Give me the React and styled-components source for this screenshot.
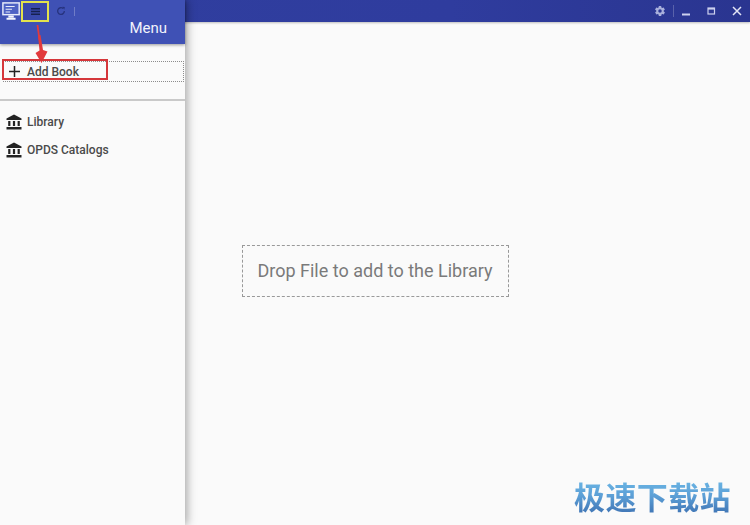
import styled, { createGlobalStyle } from 'styled-components';

const GlobalStyle = createGlobalStyle`
    html, body {
        margin: 0;
        padding: 0;
        background: #fafafa;
    }
    body {
        font-family: Roboto, "Liberation Sans", sans-serif;
    }
`;

const Page = styled.div`
    position: relative;
    display: flex;
    width: 750px;
    height: 525px;
    overflow: hidden;
    background: #fafafa;
`;

const Drawer = styled.aside`
    position: absolute;
    z-index: 2;
    top: 0;
    bottom: 0;
    left: 0;
    width: 185px;
    display: flex;
    flex-direction: column;
    background: #fafafa;
    box-shadow: 2px 0 9px rgba(0, 0, 0, 0.35);
`;

const DrawerHeader = styled.header`
    height: 44px;
    box-sizing: border-box;
    display: flex;
    align-items: flex-end;
    justify-content: flex-end;
    padding: 0 18px 7px 0;
    background: #3f51b5;
    box-shadow: 0 1px 3px rgba(0, 0, 0, 0.4);
    color: #f2f3fb;
    font-size: 15px;
`;

const AddBookRow = styled.div`
    height: 21px;
    margin: 17px 1px 0 3px;
    box-sizing: border-box;
    display: flex;
    align-items: center;
    gap: 7px;
    padding-left: 5px;
    border: 1px dotted #8c8c8c;
    font-size: 12px;
    font-weight: 500;
    color: #4a4a4a;
`;

const Divider = styled.hr`
    width: 100%;
    height: 2px;
    margin: 17px 0 0;
    border: 0;
    background: #c9c9c9;
`;

const NavList = styled.nav`
    display: flex;
    flex-direction: column;
    padding: 11px 0 0 6px;
    gap: 8px;
`;

const NavItem = styled.div`
    height: 20px;
    display: flex;
    align-items: center;
    gap: 5px;
    font-size: 12px;
    font-weight: 500;
    color: #4a4a4a;
`;

const Main = styled.main`
    flex: 1;
    display: flex;
    flex-direction: column;
    min-width: 0;
`;

const TitleBar = styled.div`
    height: 22px;
    box-sizing: border-box;
    display: flex;
    align-items: center;
    justify-content: flex-end;
    gap: 15px;
    padding-right: 7px;
    background: linear-gradient(90deg, #303f9f 0%, #2f3c9e 60%, #2a3590 100%);
    box-shadow: 0 1px 2px rgba(0, 0, 0, 0.25);
`;

const SettingsGroup = styled.div`
    display: flex;
    align-items: center;
    gap: 7px;
    margin-right: -8px;
`;

const BarSeparator = styled.span`
    width: 1px;
    height: 12px;
    background: rgba(255, 255, 255, 0.22);
`;

const DropArea = styled.div`
    flex: 1;
    display: flex;
    align-items: center;
    justify-content: center;
    padding-bottom: 6px;
`;

const DropBox = styled.div`
    width: 267px;
    height: 52px;
    box-sizing: border-box;
    display: flex;
    align-items: center;
    justify-content: center;
    border: 1px dashed #999;
    font-size: 18px;
    color: #7a7a7a;
`;

const ToolIcons = styled.div`
    position: absolute;
    z-index: 3;
    top: 0;
    left: 0;
    display: flex;
    align-items: flex-start;
`;

const AppIcon = styled.svg`
    width: 19px;
    height: 19px;
    margin: 2px 0 0 2px;
`;

const MenuHighlight = styled.div`
    width: 28px;
    height: 21px;
    box-sizing: border-box;
    display: flex;
    align-items: center;
    justify-content: center;
    margin-top: 1px;
    border: 2px solid #e2e24c;
    background: #3949ab;
`;

const ReloadIcon = styled.svg`
    width: 10px;
    height: 10px;
    margin: 6px 0 0 7px;
`;

const ToolSeparator = styled.span`
    width: 1px;
    height: 9px;
    margin: 7px 0 0 8px;
    background: rgba(255, 255, 255, 0.25);
`;

const RedBox = styled.div`
    position: absolute;
    z-index: 3;
    top: 59px;
    left: 2px;
    width: 106px;
    height: 21px;
    box-sizing: border-box;
    border: 2px solid #d5363a;
`;

const Arrow = styled.svg`
    position: absolute;
    z-index: 3;
    top: 22px;
    left: 30px;
    width: 20px;
    height: 44px;
`;

const Watermark = styled.div`
    position: absolute;
    z-index: 3;
    right: 19px;
    bottom: 11px;
    font-family: "Noto Sans CJK SC", sans-serif;
    font-size: 31px;
    font-weight: 700;
    line-height: 36px;
    letter-spacing: 0.4px;
    background: linear-gradient(180deg, #6cb8e6 0%, #5c9fd6 50%, #3f74b4 100%);
    -webkit-background-clip: text;
    background-clip: text;
    color: transparent;
`;

function BankIcon() {
    return (
        <svg width="16" height="16" viewBox="0 0 16 16" fill="#222">
            <path d="M8 0.5 L15.5 4.5 V6 H0.5 V4.5 Z" />
            <rect x="2.2" y="7" width="2.2" height="5" />
            <rect x="6.9" y="7" width="2.2" height="5" />
            <rect x="11.6" y="7" width="2.2" height="5" />
            <rect x="0.5" y="13" width="15" height="2.5" />
        </svg>
    );
}

function App() {
    return (
        <>
            <GlobalStyle />
            <Page>
                <Drawer>
                    <DrawerHeader>Menu</DrawerHeader>
                    <AddBookRow>
                        <svg width="11" height="11" viewBox="0 0 11 11" stroke="#222" strokeWidth="1.5">
                            <path d="M5.5 0 V11 M0 5.5 H11" />
                        </svg>
                        Add Book
                    </AddBookRow>
                    <Divider />
                    <NavList>
                        <NavItem>
                            <BankIcon />
                            Library
                        </NavItem>
                        <NavItem>
                            <BankIcon />
                            OPDS Catalogs
                        </NavItem>
                    </NavList>
                </Drawer>
                <Main>
                    <TitleBar>
                        <SettingsGroup>
                            <svg width="12" height="12" viewBox="0 0 24 24" fill="#a9b0dc">
                                <path d="M19.4 13c.04-.33.1-.66.1-1s-.06-.67-.1-1l2.1-1.6c.2-.15.25-.42.12-.64l-2-3.46c-.12-.22-.39-.3-.6-.22l-2.5 1c-.52-.4-1.08-.73-1.7-.98l-.37-2.65A.5.5 0 0 0 14 2h-4a.5.5 0 0 0-.5.42l-.37 2.65c-.62.25-1.18.58-1.7.98l-2.5-1c-.22-.08-.48 0-.6.22l-2 3.46c-.13.22-.08.49.12.64L4.6 11c-.04.33-.1.66-.1 1s.06.67.1 1l-2.1 1.6c-.2.15-.25.42-.12.64l2 3.46c.12.22.39.3.6.22l2.5-1c.52.4 1.08.73 1.7.98l.37 2.65c.04.24.25.42.5.42h4c.25 0 .46-.18.5-.42l.37-2.65c.62-.25 1.18-.58 1.7-.98l2.5 1c.22.08.48 0 .6-.22l2-3.46c.13-.22.08-.49-.12-.64L19.4 13zM12 15.5a3.5 3.5 0 1 1 0-7 3.5 3.5 0 0 1 0 7z" />
                            </svg>
                            <BarSeparator />
                        </SettingsGroup>
                        <svg width="10" height="10" viewBox="0 0 10 10" stroke="#cdd1ee" strokeWidth="2">
                            <path d="M1 8.5 H9" />
                        </svg>
                        <svg width="10" height="10" viewBox="0 0 10 10" fill="none" stroke="#cdd1ee" strokeWidth="1.2">
                            <rect x="2" y="2" width="6.5" height="6" />
                            <path d="M2 2.8 H8.5" strokeWidth="1.6" />
                        </svg>
                        <svg width="12" height="12" viewBox="0 0 12 12" stroke="#e3e5f5" strokeWidth="1.5">
                            <path d="M2 2 L10 10 M10 2 L2 10" />
                        </svg>
                    </TitleBar>
                    <DropArea>
                        <DropBox>Drop File to add to the Library</DropBox>
                    </DropArea>
                </Main>
                <ToolIcons>
                    <AppIcon viewBox="0 0 21 21">
                        <rect x="1" y="1" width="18" height="13" fill="#4e62c4" stroke="#e8ecfa" strokeWidth="1.6" />
                        <path d="M4 5 H14 M4 8 H11 M4 11 H9" stroke="#e8ecfa" strokeWidth="1.2" />
                        <path d="M7 15 H13 V17 H7 Z M5 17.5 H15 V19.5 H5 Z" fill="#f4f6fe" />
                    </AppIcon>
                    <MenuHighlight>
                        <svg width="9" height="7" viewBox="0 0 9 7" stroke="#16204f" strokeWidth="1.5">
                            <path d="M0 0.75 H9 M0 3.5 H9 M0 6.25 H9" />
                        </svg>
                    </MenuHighlight>
                    <ReloadIcon viewBox="0 0 12 12" fill="none" stroke="#27337e" strokeWidth="1.6">
                        <path d="M10 6 A4 4 0 1 1 8.6 3" />
                        <path d="M7.6 1 L10.6 1.2 L10 4.4 Z" fill="#27337e" stroke="none" />
                    </ReloadIcon>
                    <ToolSeparator />
                </ToolIcons>
                <Arrow viewBox="0 0 20 44">
                    <path d="M7.5 3 L9.5 18" stroke="#e23a3c" strokeWidth="1.8" fill="none" />
                    <path d="M8 13 L10.5 13 L13 28 L17.5 29.5 L11.5 41 L5.5 31 L9.5 28.5 Z" fill="#e23a3c" />
                </Arrow>
                <RedBox />
                <Watermark>极速下载站</Watermark>
            </Page>
        </>
    );
}

export default App;
